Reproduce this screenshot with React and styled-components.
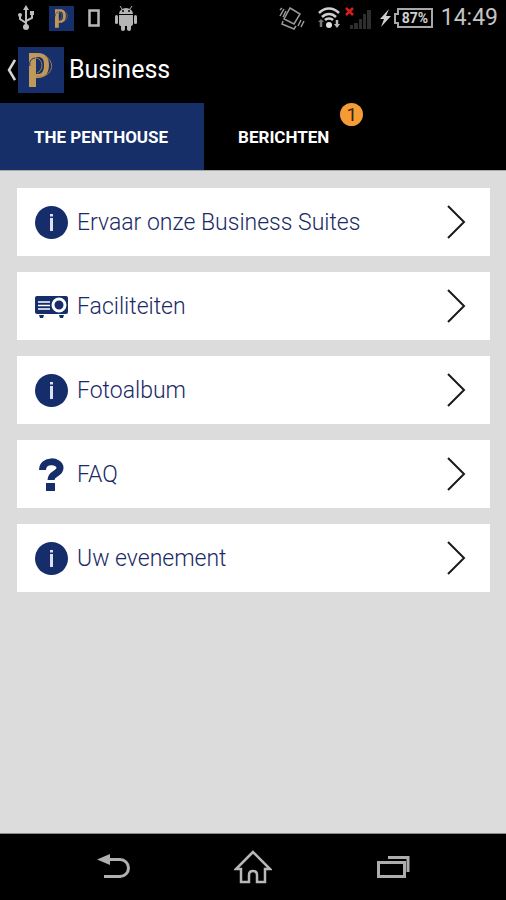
import React, {useState} from "react";
import styled, {createGlobalStyle} from "styled-components";

const GlobalStyle = createGlobalStyle`
  body {
    margin: 0;
    background-color: #DCDCDC;
    font-family: Roboto, sans-serif;
  }
`

const tabs = [
    {id: 'penthouse', title: 'THE PENTHOUSE'},
    {id: 'messages', title: 'BERICHTEN', count: 1},
]

const items = [
    {id: 1, icon: 'info', title: 'Ervaar onze Business Suites'},
    {id: 2, icon: 'projector', title: 'Faciliteiten'},
    {id: 3, icon: 'info', title: 'Fotoalbum'},
    {id: 4, icon: 'question', title: 'FAQ'},
    {id: 5, icon: 'info', title: 'Uw evenement'},
]

const Page = styled.div`
  min-height: 100vh;
  display: flex;
  flex-direction: column;
`

const StatusBar = styled.div`
  display: flex;
  align-items: center;
  justify-content: space-between;
  height: 36px;
  padding: 0 8px 0 17px;
  background-color: #000;
`

const StatusLeft = styled.div`
  display: flex;
  align-items: center;
  gap: 14px;
`

const StatusRight = styled.div`
  display: flex;
  align-items: center;
  gap: 8px;
`

const Network = styled.div`
  display: flex;
  align-items: center;
  gap: 4px;
  margin-left: 4px;
`

const Clock = styled.time`
  color: #C4C4C4;
  font-size: 23px;
  line-height: 36px;
`

const Battery = styled.svg`
  font-size: 14px;
  font-weight: 700;
`

const Header = styled.header`
  display: flex;
  align-items: center;
  height: 67px;
  padding: 0 6px;
  background-color: #000;
`

const BackButton = styled.button`
  display: flex;
  align-items: center;
  gap: 2px;
  padding: 0;
  border: none;
  background: none;
  cursor: pointer;
`

const Title = styled.h1`
  margin: 0 0 0 5px;
  color: #FFF;
  font-size: 25px;
  font-weight: 400;
  line-height: 30px;
`

const Tabs = styled.nav`
  display: flex;
  height: 67px;
  background-color: #000;
  border-bottom: 1px solid #A8A8A8;
`

const Tab = styled.button`
  position: relative;
  padding: 0 36px 0 34px;
  border: none;
  background-color: ${({$active}) => $active ? '#162F68' : '#000'};
  color: #FFF;
  font-family: inherit;
  font-size: 17px;
  font-weight: 700;
  line-height: 24px;
  cursor: pointer;
`

const Badge = styled.span`
  position: absolute;
  top: 0;
  right: 2px;
  width: 23px;
  height: 23px;
  border-radius: 50%;
  background-color: #F59C36;
  color: #3A2408;
  font-size: 19px;
  font-weight: 400;
  line-height: 23px;
  text-align: center;
`

const List = styled.ul`
  flex: 1;
  display: flex;
  flex-direction: column;
  gap: 16px;
  margin: 0;
  padding: 17px 16px 17px 17px;
  list-style: none;
`

const ItemLink = styled.a`
  display: flex;
  align-items: center;
  gap: 9px;
  height: 68px;
  padding: 0 24px 0 18px;
  background-color: #FFF;
  color: #1B2A66;
  font-size: 23px;
  font-weight: 300;
  line-height: 33px;
  text-decoration: none;
`

const ItemTitle = styled.span`
  flex: 1;
`

const BottomBar = styled.nav`
  display: flex;
  align-items: center;
  justify-content: center;
  gap: 92px;
  height: 66px;
  background-color: #000;
  border-top: 1px solid #8A8A8A;
`

const NavButton = styled.button`
  display: flex;
  justify-content: center;
  width: 48px;
  padding: 0;
  border: none;
  background: none;
  cursor: pointer;
`

const Logo = ({size}) => (
    <svg width={size} height={size} viewBox="0 0 46 46" aria-hidden="true">
        <rect width="46" height="46" fill="#17306B"/>
        <path d="M11 6h9c8 0 11 5 11 12s-3 13-11 13h-2v9h-7zM18 10v17h2c4 0 6-3 6-9s-2-8-6-8z" fill="#C0985A" fillRule="evenodd"/>
        <path d="M12 14c2-3 6-4 9-2 5 4 3 12-2 14M27 9c9 5 9 16-1 20-3 1-6 1-8 0" fill="none" stroke="#A58250" strokeWidth="1"/>
        <path d="M12 19c-1-5 1-7 5-8" fill="none" stroke="#17306B" strokeWidth="1"/>
    </svg>
)

const UsbIcon = () => (
    <svg width="18" height="26" viewBox="0 0 18 26" fill="none" stroke="#BDBDBD" strokeWidth="2" aria-hidden="true">
        <path d="M9 4v17M9 18l-6-4v-4M9 16l6-3v-4"/>
        <path d="M9 0l3 5H6z" fill="#BDBDBD" stroke="none"/>
        <circle cx="9" cy="22" r="3" fill="#BDBDBD" stroke="none"/>
        <circle cx="3" cy="10" r="2" fill="#BDBDBD" stroke="none"/>
        <path d="M13 6h4v4h-4z" fill="#BDBDBD" stroke="none"/>
    </svg>
)

const DeviceIcon = () => (
    <svg width="13" height="19" viewBox="0 0 13 19" fill="none" aria-hidden="true">
        <path d="M1.5 1.5h9v15h-9z" stroke="#B8B8B8" strokeWidth="2.5"/>
    </svg>
)

const AndroidIcon = () => (
    <svg width="22" height="25" viewBox="0 0 22 25" fill="#B5B5B5" aria-hidden="true">
        <path d="M4 8a7 6 0 0 1 14 0zM4 9h14v9q0 2-2 2H6q-2 0-2-2z"/>
        <path d="M7 3L5 0M15 3l2-3" stroke="#B5B5B5"/>
        <rect y="9" width="3" height="9" rx="1.5"/>
        <rect x="19" y="9" width="3" height="9" rx="1.5"/>
        <rect x="6" y="17" width="4" height="8" rx="2"/>
        <rect x="12" y="17" width="4" height="8" rx="2"/>
        <circle cx="8" cy="5" r="1" fill="#000"/>
        <circle cx="14" cy="5" r="1" fill="#000"/>
    </svg>
)

const VibrateIcon = () => (
    <svg width="26" height="24" viewBox="0 0 26 24" fill="none" stroke="#9A9A9A" strokeWidth="1.5" aria-hidden="true">
        <path d="M11 2l10 6-6 10-10-5zM4 15l-1 3 12 5 2-3M1 10l4-7M4 11l3-6M1 4l2-2M19 20l3-6M22 21l3-6"/>
    </svg>
)

const WifiIcon = () => (
    <svg width="24" height="22" viewBox="0 0 24 22" fill="none" stroke="#D0D0D0" strokeWidth="2.5" aria-hidden="true">
        <path d="M2 6c6-6 14-6 20 0M5 10c4-4 10-4 14 0M8 13c2-2 6-2 8 0"/>
        <circle cx="12" cy="18" r="3" fill="#E0E0E0" stroke="none"/>
        <path d="M4 14v6" stroke="#777"/>
        <path d="M20 13v6" stroke="#BBB"/>
        <path d="M1 15l3-3 3 3z" fill="#777" stroke="none"/>
        <path d="M17 17h6l-3 4z" fill="#BBB" stroke="none"/>
    </svg>
)

const SignalIcon = () => (
    <svg width="26" height="23" viewBox="0 0 26 23" fill="#2E2E2E" aria-hidden="true">
        <path d="M5 18h3v4H5zM9 16h4v6H9zM14 12h3v10h-3zM18 7h3v15h-3zM22 3h4v19h-4z"/>
        <path d="M1 1l7 7M8 1L1 8" stroke="#D91C1C" strokeWidth="2.5"/>
    </svg>
)

const BatteryIcon = () => (
    <Battery width="54" height="20" viewBox="0 0 54 20" role="img" aria-label="87%">
        <path d="M10 1L1 11h4l-3 8 10-11H7z" fill="#D0D0D0"/>
        <path d="M19 1h34v18H19v-4h-3V6h3z" fill="none" stroke="#A8A8A8" strokeWidth="2"/>
        <text x="36" y="15" textAnchor="middle" fill="#D0D0D0">87%</text>
    </Battery>
)

const BackIcon = () => (
    <svg width="10" height="22" viewBox="0 0 10 22" fill="none" stroke="#D5D5D5" strokeWidth="2.5" aria-hidden="true">
        <path d="M9 1L3 11l6 10"/>
    </svg>
)

const InfoIcon = () => (
    <svg width="33" height="33" viewBox="0 0 33 33" aria-hidden="true">
        <circle cx="16.5" cy="16.5" r="16.5" fill="#162D6B"/>
        <path d="M15 12h3v13h-3zM15 8h3v2.5h-3z" fill="#DCE2F2"/>
    </svg>
)

const ProjectorIcon = () => (
    <svg width="33" height="33" viewBox="0 0 33 33" fill="#162D6B" aria-hidden="true">
        <rect y="6" width="33" height="18" rx="2"/>
        <path d="M4 25h5l-1 3H5zM24 25h5l-1 3h-3z"/>
        <path d="M3 12h12M3 15.5h12M3 19h12" stroke="#FFF" strokeWidth="1.5"/>
        <circle cx="24" cy="15" r="6" fill="#162D6B" stroke="#FFF" strokeWidth="3"/>
    </svg>
)

const QuestionIcon = () => (
    <svg width="33" height="33" viewBox="0 0 33 33" fill="none" stroke="#162D6B" aria-hidden="true">
        <path d="M7.5 12c0-11 17.5-10 17.5-2 0 6-9 5-9 12" strokeWidth="7"/>
        <path d="M11 29h9" strokeWidth="8"/>
    </svg>
)

const ChevronIcon = () => (
    <svg width="20" height="34" viewBox="0 0 20 34" fill="none" stroke="#1A1A1A" strokeWidth="2" aria-hidden="true">
        <path d="M2 1l16 16L2 33"/>
    </svg>
)

const ReturnIcon = () => (
    <svg width="33" height="26" viewBox="0 0 33 26" fill="none" aria-hidden="true">
        <path d="M12 5.5h11a8.5 8.5 0 0 1 0 17H7" stroke="#B0B0B0" strokeWidth="3"/>
        <path d="M0 5.5L13 0v11z" fill="#B0B0B0"/>
    </svg>
)

const HomeIcon = () => (
    <svg width="38" height="34" viewBox="0 0 38 34" fill="none" stroke="#B8B8B8" strokeWidth="2.5" aria-hidden="true">
        <path d="M19 2L2 19h5v13h8v-7q0-4 4-4t4 4v7h8V19h5z"/>
    </svg>
)

const RecentIcon = () => (
    <svg width="33" height="24" viewBox="0 0 33 24" fill="none" stroke="#ADADAD" strokeWidth="3" aria-hidden="true">
        <path d="M1.5 7.5h26v14h-26z"/>
        <path d="M11 2.5h20V17"/>
    </svg>
)

const icons = {
    info: InfoIcon,
    projector: ProjectorIcon,
    question: QuestionIcon,
}

const MenuItem = ({icon, title}) => {
    const Icon = icons[icon]

    return (
        <li>
            <ItemLink href="#">
                <Icon/>
                <ItemTitle>{title}</ItemTitle>
                <ChevronIcon/>
            </ItemLink>
        </li>
    )
}

const App = () => {
    const [active, setActive] = useState('penthouse')

    return (
        <Page>
            <GlobalStyle/>
            <StatusBar>
                <StatusLeft>
                    <UsbIcon/>
                    <Logo size={25}/>
                    <DeviceIcon/>
                    <AndroidIcon/>
                </StatusLeft>
                <StatusRight>
                    <VibrateIcon/>
                    <Network>
                        <WifiIcon/>
                        <SignalIcon/>
                    </Network>
                    <BatteryIcon/>
                    <Clock>14:49</Clock>
                </StatusRight>
            </StatusBar>
            <Header>
                <BackButton aria-label="Terug">
                    <BackIcon/>
                    <Logo size={46}/>
                </BackButton>
                <Title>Business</Title>
            </Header>
            <Tabs>
                {
                    tabs.map(tab => (
                        <Tab
                            key={tab.id}
                            $active={tab.id === active}
                            onClick={() => setActive(tab.id)}
                        >
                            {tab.title}
                            {tab.count && <Badge>{tab.count}</Badge>}
                        </Tab>
                    ))
                }
            </Tabs>
            <List>
                {items.map(item => <MenuItem key={item.id} icon={item.icon} title={item.title}/>)}
            </List>
            <BottomBar>
                <NavButton aria-label="Terug"><ReturnIcon/></NavButton>
                <NavButton aria-label="Start"><HomeIcon/></NavButton>
                <NavButton aria-label="Recent"><RecentIcon/></NavButton>
            </BottomBar>
        </Page>
    )
}

export default App
